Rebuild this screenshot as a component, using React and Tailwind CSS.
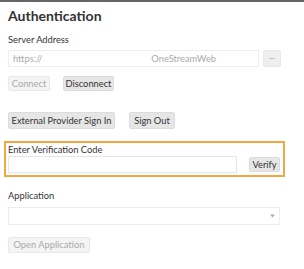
import React from 'react';

const btn = 'text-[9.3px] leading-none border rounded-[2px] flex items-center justify-center whitespace-nowrap';
const btnOn = `${btn} bg-[#e6e6e6] border-[#dcdcdc] text-[#333]`;
const btnOff = `${btn} bg-[#f4f4f4] border-[#e8e8e8] text-[#aaa]`;

export default function App() {
  return (
    <div className="w-[304px] h-[269px] bg-white overflow-hidden" style={{ fontFamily: 'Lato, "Open Sans", sans-serif' }}>
      <div className="h-[2px] bg-[#666]" />
      <div className="px-[8px]">
        <h1 className="mt-[4px] text-[14px] leading-[20px] font-bold text-[#333]">Authentication</h1>
        <div className="mt-[8px] text-[9.3px] leading-[12px] text-[#333]">Server Address</div>
        <div className="mt-[4px] flex items-center gap-[4px]">
          <div className="w-[251px] h-[17px] border border-[#eee] flex items-center pl-[4px] text-[9.3px] text-[#aaa]">
            <span>https://</span>
            <span className="w-[109px] h-[15px] shrink-0 bg-white" />
            <span>OneStreamWeb</span>
          </div>
          <button className="w-[18px] h-[17px] bg-[#efefef] border border-[#e8e8e8] rounded-[2px] flex items-center justify-center text-[7px] leading-none text-[#999]">···</button>
        </div>
        <div className="mt-[9px] flex gap-[13px]">
          <button className={`${btnOff} h-[15px] w-[42px]`}>Connect</button>
          <button className={`${btnOn} h-[15px] w-[51px]`}>Disconnect</button>
        </div>
        <div className="mt-[21px] flex gap-[14px]">
          <button className={`${btnOn} h-[17px] w-[107px]`}>External Provider Sign In</button>
          <button className={`${btnOn} h-[17px] w-[46px]`}>Sign Out</button>
        </div>
      </div>
      <div className="ml-[4px] mt-[12px] w-[281px] h-[36px] border-2 border-[#f5a742] px-[2px] pt-[1px]">
        <div className="text-[9.3px] leading-[12px] text-[#333]">Enter Verification Code</div>
        <div className="flex items-center gap-[12px]">
          <div className="w-[229px] h-[17px] border border-[#e6e6e6]" />
          <button className={`${btnOn} h-[15px] w-[31px]`}>Verify</button>
        </div>
      </div>
      <div className="px-[8px]">
        <div className="mt-[13px] text-[9.3px] leading-[12px] text-[#333]">Application</div>
        <div className="mt-[5px] w-[272px] h-[18px] border border-[#eee] flex items-center justify-end pr-[4px]">
          <svg width="5" height="4" viewBox="0 0 5 4"><path d="M0 0.5h5L2.5 3.5z" fill="#aaa" /></svg>
        </div>
        <button className={`${btnOff} mt-[12px] h-[16px] w-[82px]`}>Open Application</button>
      </div>
    </div>
  );
}
